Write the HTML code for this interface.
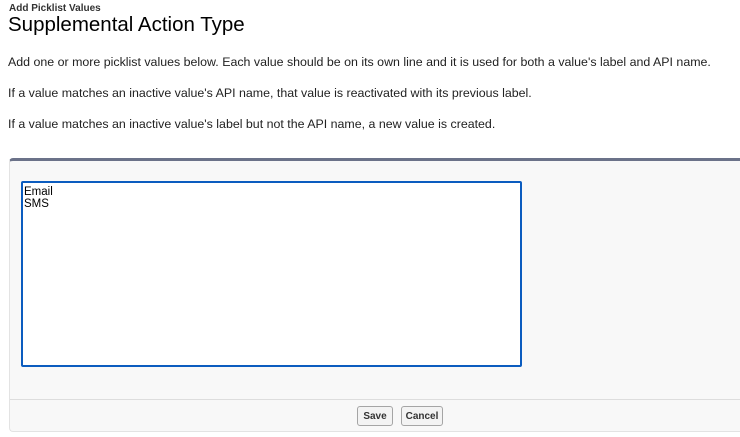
<!DOCTYPE html>
<html><head><style>
body{margin:0;width:740px;height:437px;background:#fff;font-family:"Liberation Sans",Arial,sans-serif;color:#000;position:relative;overflow:hidden}
.a{position:absolute}
</style></head><body>
<div class="a" style="left:9px;top:3px;font-size:10px;font-weight:bold;color:#333">Add Picklist Values</div>
<div class="a" style="left:8px;top:13px;font-size:20.5px">Supplemental Action Type</div>
<div class="a" style="left:8px;top:55px;font-size:12.4px;color:#222">Add one or more picklist values below. Each value should be on its own line and it is used for both a value's label and API name.</div>
<div class="a" style="left:8px;top:86px;font-size:12.4px;color:#222">If a value matches an inactive value's API name, that value is reactivated with its previous label.</div>
<div class="a" style="left:8px;top:117px;font-size:12.4px;color:#222">If a value matches an inactive value's label but not the API name, a new value is created.</div>
<div class="a" style="left:9px;top:158px;width:740px;height:274px;background:#f8f8f8;border-top:3px solid #6b7289;border-left:1px solid #e3e3e3;border-bottom:1px solid #e3e3e3;box-sizing:border-box;border-radius:4px 0 0 4px"></div>
<div class="a" style="left:21px;top:181px;width:501px;height:186px;border:2px solid #0b5cbf;border-radius:2px;background:#fff;box-sizing:border-box;font-size:11.5px;line-height:12px;padding:3px 1px">Email<br>SMS</div>
<div class="a" style="left:10px;top:399px;width:730px;height:1px;background:#ddd"></div>
<div class="a" style="left:357px;top:406px;width:36px;height:20px;border:1px solid #a5a5a5;border-radius:3px;background:#f3f3f3;box-sizing:border-box;font-size:10px;font-weight:bold;color:#333;text-align:center;line-height:20px">Save</div>
<div class="a" style="left:401px;top:406px;width:42px;height:20px;border:1px solid #a5a5a5;border-radius:3px;background:#f3f3f3;box-sizing:border-box;font-size:10px;font-weight:bold;color:#333;text-align:center;line-height:20px">Cancel</div>
</body></html>
